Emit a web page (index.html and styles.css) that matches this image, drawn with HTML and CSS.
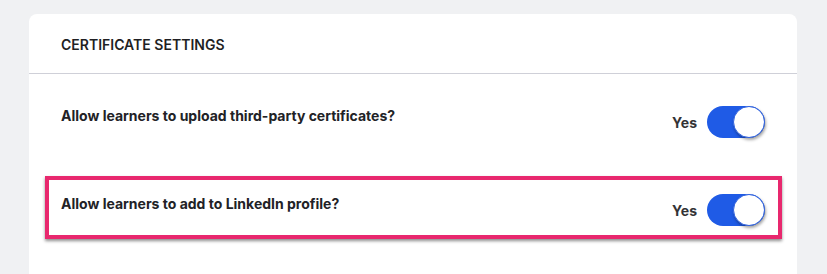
FILE: index.html
```html
<!DOCTYPE html>
<html lang="en">
<head>
<meta charset="utf-8">
<title>Certificate settings</title>
<link rel="stylesheet" href="styles.css">
</head>
<body>
<div class="card">
  <div class="card-header">CERTIFICATE SETTINGS</div>
  <div class="rows">
    <div class="row">
      <div class="label">Allow learners to upload third-party certificates?</div>
      <div class="control">
        <span class="state">Yes</span>
        <span class="toggle on"><span class="knob"></span></span>
      </div>
    </div>
    <div class="row highlight">
      <div class="label">Allow learners to add to LinkedIn profile?</div>
      <div class="control">
        <span class="state">Yes</span>
        <span class="toggle on"><span class="knob"></span></span>
      </div>
    </div>
  </div>
</div>
</body>
</html>
```
FILE: styles.css
```css
html, body {
  margin: 0;
  padding: 0;
}
body {
  background: #f0f1f3;
  font-family: Inter, "Noto Sans", "Liberation Sans", sans-serif;
  color: #1f1f23;
  padding: 14px 30px 0 29px;
  height: 274px;
  box-sizing: border-box;
  overflow: hidden;
}
.card {
  background: #ffffff;
  border-radius: 8px 8px 0 0;
  height: 260px;
}
.card-header {
  height: 60px;
  box-sizing: border-box;
  border-bottom: 1px solid #cfd0d8;
  padding: 1px 32px 0;
  display: flex;
  align-items: center;
  font-size: 14px;
  font-weight: 600;
}
.rows {
  display: flex;
  flex-direction: column;
  gap: 25px;
  padding: 14px 15px 0 16px;
}
.row {
  display: flex;
  justify-content: space-between;
  align-items: flex-start;
  border: 4px solid transparent;
  padding: 14px 13px 9px 12px;
  height: 63px;
  box-sizing: border-box;
}
.row.highlight {
  border-color: #e8286e;
  box-shadow: 0 2px 3px rgba(0, 0, 0, 0.45);
}
.label {
  font-size: 14px;
  font-weight: 700;
  line-height: 20px;
  color: #222226;
}
.control {
  display: flex;
  align-items: center;
  gap: 10px;
}
.state {
  font-size: 14px;
  font-weight: 700;
  color: #333336;
}
.toggle {
  width: 58px;
  height: 32px;
  border-radius: 16px;
  background: #1f5be6;
  display: flex;
  justify-content: flex-end;
}
.knob {
  width: 32px;
  height: 32px;
  box-sizing: border-box;
  border-radius: 50%;
  background: #ffffff;
  border: 1px solid #2f62e0;
  box-shadow: 1px 2px 3px rgba(0, 0, 0, 0.35);
}
```
